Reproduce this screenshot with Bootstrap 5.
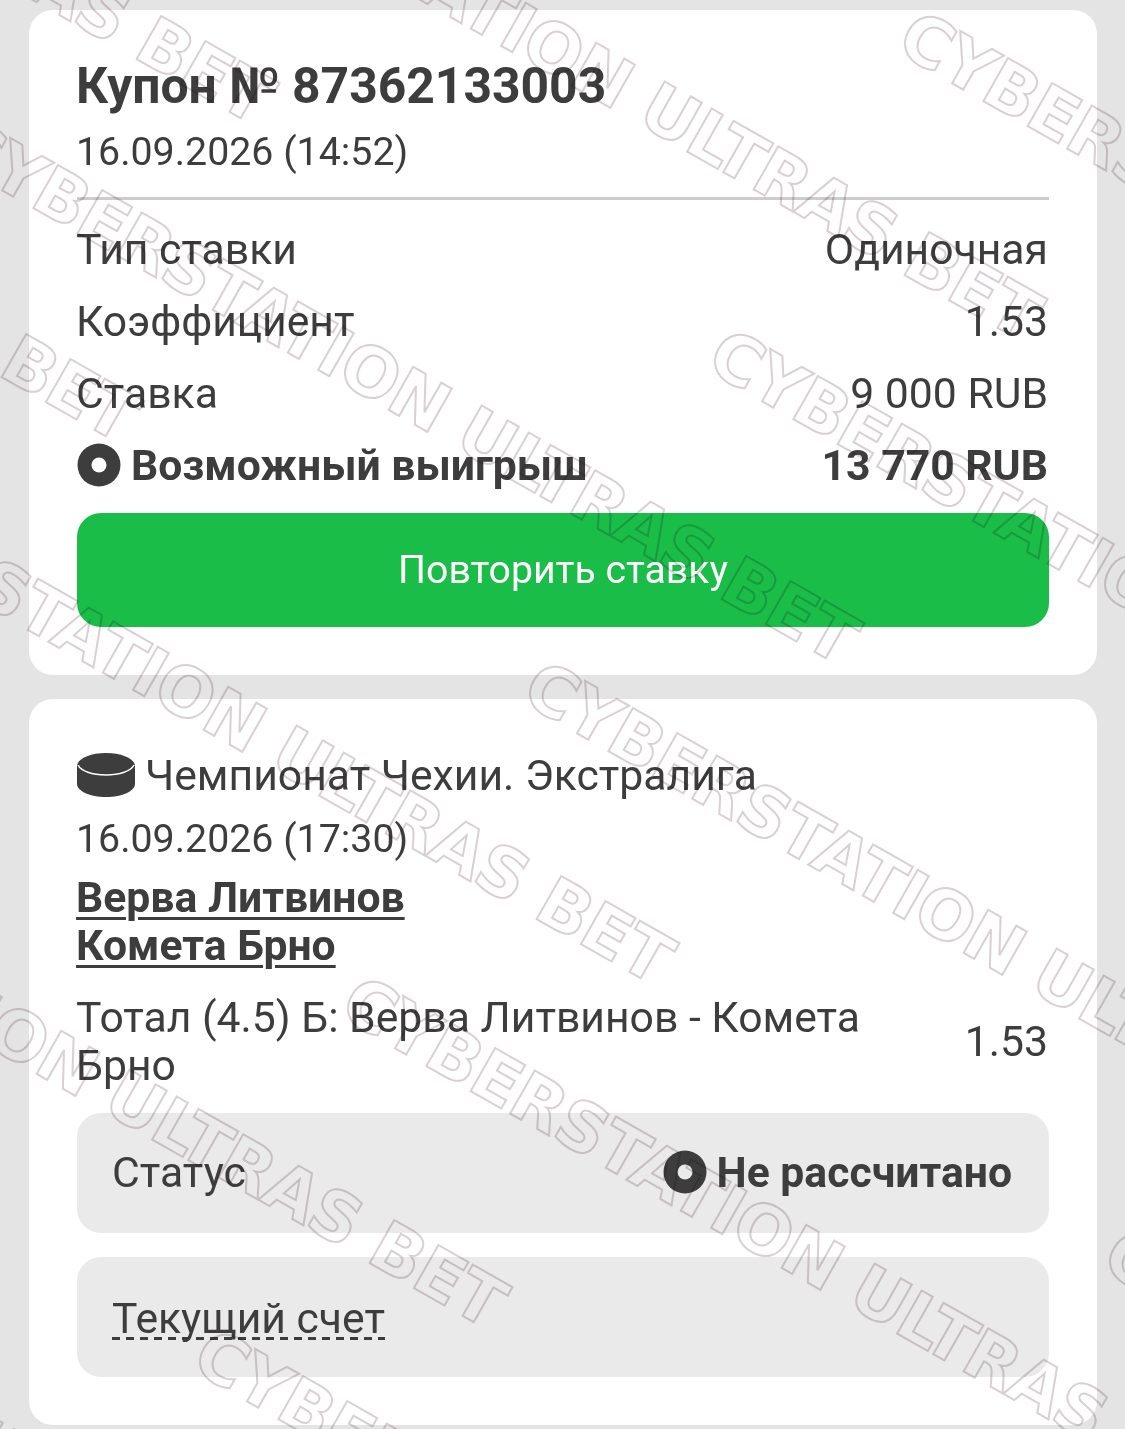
<!DOCTYPE html>
<html lang="ru">
<head>
    <meta charset="UTF-8">
    <meta name="viewport" content="width=device-width, initial-scale=1.0">
    <title>Купон</title>
    <link href="https://cdn.jsdelivr.net/npm/bootstrap@5.3.0/dist/css/bootstrap.min.css" rel="stylesheet">
    <style>
        html, body { height: 1429px; overflow: hidden; }
        body { background: #e4e4e4; color: #3d3d3d; font-family: Roboto, "Liberation Sans", sans-serif; font-size: 42.7px; line-height: 48px; position: relative; }
        .page-wrap { padding: 10px 28px 0 29px; }
        .ticket { background: #fff; border-radius: 24px; padding: 48px; margin-bottom: 24px; }
        .ticket-one { height: 665px; padding-top: 52px; }
        .ticket-two { height: 726px; padding-top: 52px; }
        .shift-text { margin-left: -1px; margin-right: 1px; }
        .ticket-title { font-size: 49.8px; font-weight: 700; line-height: 48px; margin-top: 0; margin-bottom: 0; }
        .ticket-date { font-size: 39.3px; line-height: 48px; margin-top: 18px; }
        .ticket-line { border-top: 3px solid #cdcdcd; margin: 21px 0 0; opacity: 1; }
        .info-row { height: 72px; }
        .info-first { margin-top: 13px; }
        .dot-icon { width: 44px; height: 44px; flex: none; margin-left: 1px; margin-right: 10px; }
        .repeat-btn { background: #1bbd49; border: 0; border-radius: 24px; color: #fff; font-size: 39.2px; height: 114px; margin-top: 12px; width: 100%; }
        .league-row { height: 48px; margin-top: 0; }
        .puck-icon { width: 58px; height: 44px; flex: none; margin-left: 1px; margin-right: 10px; }
        .match-date { font-size: 39.3px; margin-top: 16px; }
        .teams { font-weight: 700; margin-top: 10px; text-decoration: underline; text-underline-offset: 5px; text-decoration-thickness: 3px; }
        .bet-row { margin-top: 24px; }
        .bet-text { width: 800px; }
        .state-box { background: #eaeaea; border-radius: 24px; height: 120px; padding: 0 37px 2px 35px; margin-top: 24px; }
        .score-label { background: repeating-linear-gradient(90deg, #3d3d3d 0 8px, transparent 8px 14px) left bottom / 100% 3px no-repeat; line-height: 44px; padding-bottom: 0; margin-top: 4px; }
        .wm-layer { position: absolute; inset: 0; overflow: hidden; pointer-events: none; mix-blend-mode: multiply; }
        .wm-text { position: absolute; color: transparent; font-family: "DejaVu Sans", sans-serif; font-size: 68px; font-weight: 700; letter-spacing: -1px; line-height: 1; white-space: nowrap; transform: rotate(29.6deg); transform-origin: 0 50%; -webkit-text-stroke: 2px #d9d0d6; }
    </style>
</head>
<body>
    <div class="page-wrap">
        <div class="ticket ticket-one">
            <h1 class="ticket-title shift-text">Купон № 87362133003</h1>
            <div class="ticket-date shift-text">16.09.2026 (14:52)</div>
            <hr class="ticket-line">
            <div class="info-row info-first shift-text d-flex justify-content-between align-items-center"><span>Тип ставки</span><span>Одиночная</span></div>
            <div class="info-row shift-text d-flex justify-content-between align-items-center"><span>Коэффициент</span><span>1.53</span></div>
            <div class="info-row shift-text d-flex justify-content-between align-items-center"><span>Ставка</span><span>9 000 RUB</span></div>
            <div class="info-row shift-text d-flex justify-content-between align-items-center fw-bold">
                <span class="d-flex align-items-center">
                    <svg class="dot-icon" viewBox="0 0 44 44"><circle cx="22" cy="22" r="21.5" fill="#3d3d3d"/><circle cx="22" cy="22" r="7.5" fill="#fff"/></svg>
                    Возможный выигрыш
                </span>
                <span>13 770 RUB</span>
            </div>
            <button type="button" class="btn repeat-btn">Повторить ставку</button>
        </div>

        <div class="ticket ticket-two">
            <div class="league-row shift-text d-flex align-items-center">
                <svg class="puck-icon" viewBox="0 0 58 44">
                    <path d="M0 13C0 6 13 0 29 0s29 6 29 13v18c0 7-13 13-29 13S0 38 0 31z" fill="#3d3d3d"/>
                    <path d="M1 12c3 6 14 10 28 10s25-4 28-10" fill="none" stroke="#fff" stroke-width="1.5"/>
                </svg>
                <span>Чемпионат Чехии. Экстралига</span>
            </div>
            <div class="match-date shift-text">16.09.2026 (17:30)</div>
            <div class="teams shift-text">Верва Литвинов<br>Комета Брно</div>
            <div class="bet-row shift-text d-flex justify-content-between align-items-center">
                <div class="bet-text">Тотал (4.5) Б: Верва Литвинов - Комета Брно</div>
                <div>1.53</div>
            </div>
            <div class="state-box d-flex justify-content-between align-items-center">
                <span>Статус</span>
                <span class="d-flex align-items-center fw-bold">
                    <svg class="dot-icon" viewBox="0 0 44 44"><circle cx="22" cy="22" r="21.5" fill="#3d3d3d"/><circle cx="22" cy="22" r="7.5" fill="#eaeaea"/></svg>
                    Не рассчитано
                </span>
            </div>
            <div class="state-box d-flex align-items-center">
                <span class="score-label">Текущий счет</span>
            </div>
        </div>
    </div>

    <div class="wm-layer" id="wmLayer"></div>

    <script>
        // водяной знак: начало каждой строки
        const wmStarts = [
            [-630, -403], [-765, -85], [138, -187], [-45, 137], [-230, 457], [-397, 801], [-582, 1121],
            [905, 30], [715, 348], [530, 680], [348, 995], [200, 1348], [1110, 1248]
        ];
        const wmLayer = document.getElementById('wmLayer');
        wmStarts.forEach(function (p) {
            const el = document.createElement('span');
            el.className = 'wm-text';
            el.textContent = 'CYBERSTATION ULTRAS BET';
            el.style.left = p[0] + 'px';
            el.style.top = (p[1] - 34) + 'px';
            wmLayer.appendChild(el);
        });
    </script>
    <script src="https://cdn.jsdelivr.net/npm/bootstrap@5.3.0/dist/js/bootstrap.bundle.min.js"></script>
</body>
</html>
